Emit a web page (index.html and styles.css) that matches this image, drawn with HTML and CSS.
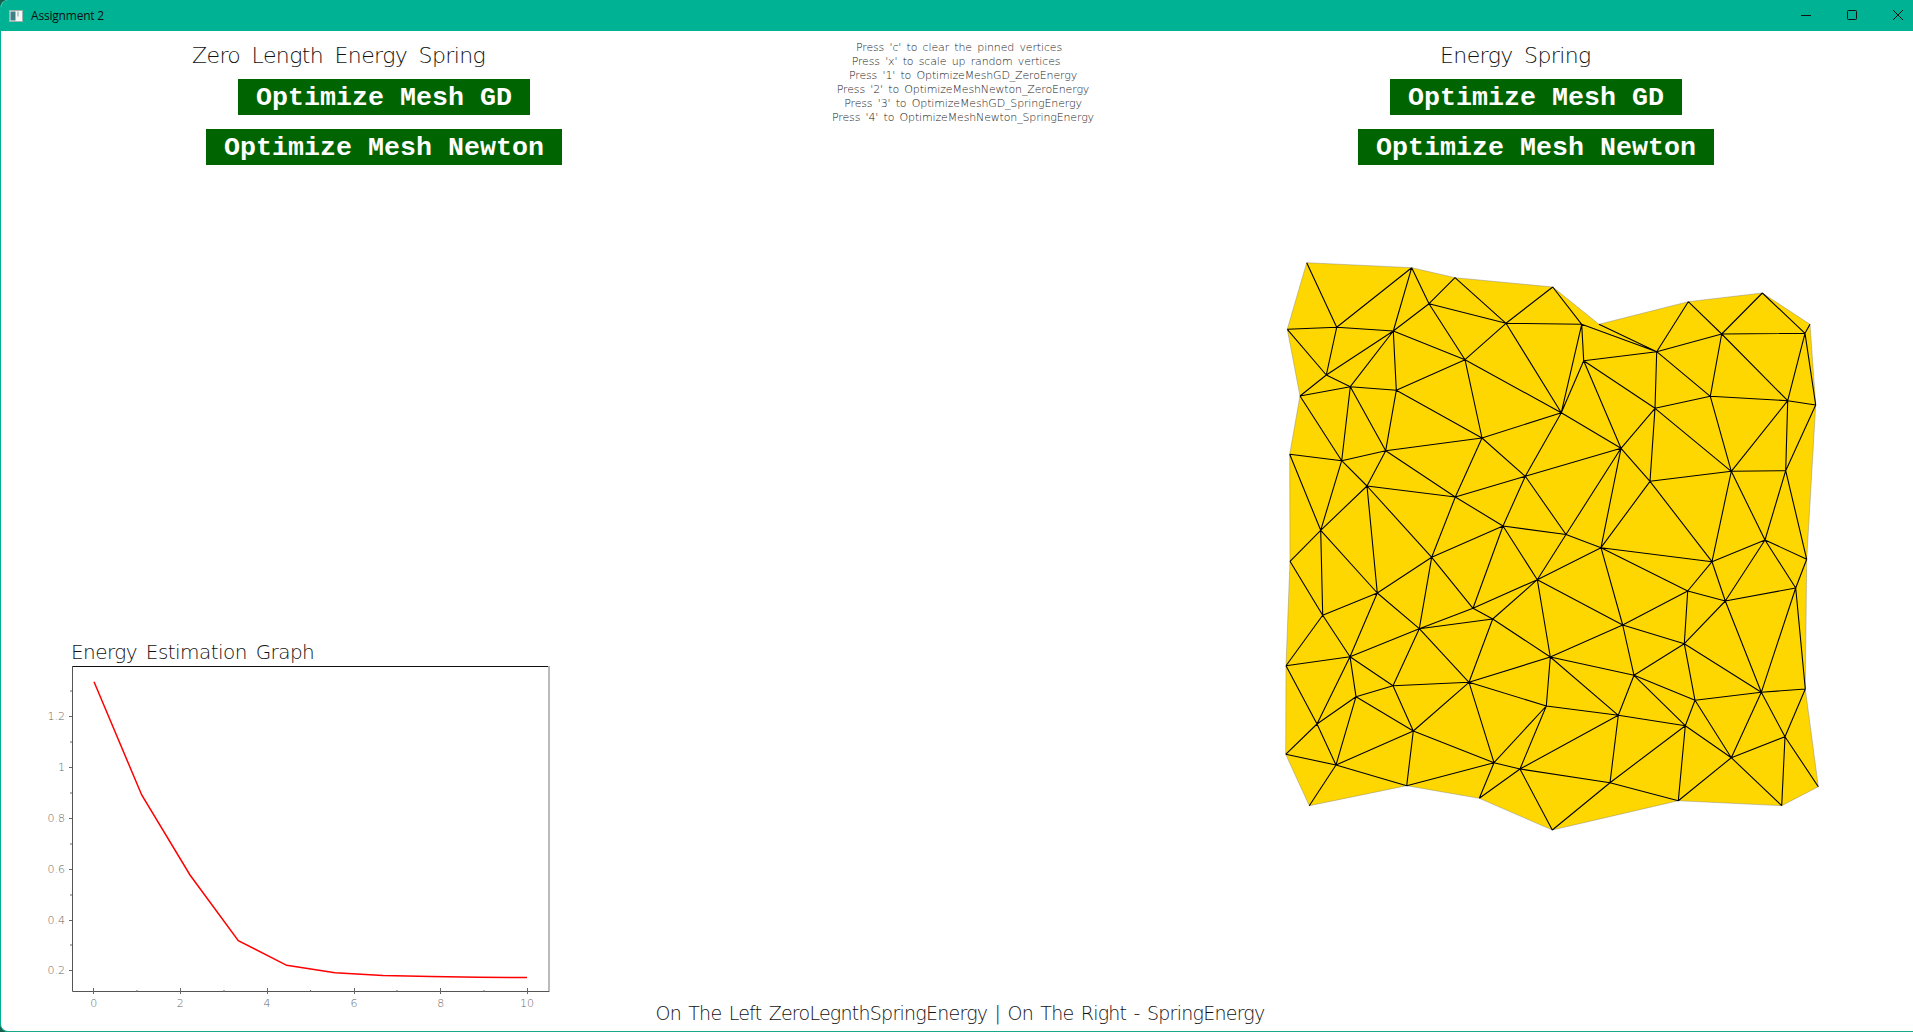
FILE: index.html
```html
<!DOCTYPE html>
<html lang="en">
<head>
<meta charset="utf-8">
<title>Assignment 2</title>
<link rel="stylesheet" href="styles.css">
</head>
<body>
<div class="window">
  <header class="titlebar">
    <svg class="app-icon" viewBox="0 0 14 12" aria-hidden="true">
      <rect x="0.5" y="0.5" width="13" height="11" fill="#f4f7f6" stroke="#9fb3ad"/>
      <rect x="1.5" y="1.5" width="5" height="9" fill="#3f7f86"/>
      <rect x="8" y="1.5" width="2" height="5" fill="#b9cdd0"/>
    </svg>
    <span class="app-title">Assignment 2</span>
    <div class="controls">
      <svg class="ctl" viewBox="0 0 10 10" aria-hidden="true"><path d="M0 5.5H10"/></svg>
      <svg class="ctl" viewBox="0 0 10 10" aria-hidden="true"><rect x="0.5" y="0.5" width="9" height="9" rx="1"/></svg>
      <svg class="ctl" viewBox="0 0 10 10" aria-hidden="true"><path d="M0 0L10 10M10 0L0 10"/></svg>
    </div>
  </header>
  <main class="content">
    <section class="col col-left">
      <h2 class="heading heading-left">Zero Length Energy Spring</h2>
      <button class="btn btn-gd-left">Optimize Mesh GD</button>
      <button class="btn btn-newton-left">Optimize Mesh Newton</button>
      <div class="graph">
        <h3 class="graph-title">Energy Estimation Graph</h3>
        <svg class="plot" viewBox="40 666 520 349" aria-label="Energy plot">
          <path class="frame" d="M72.5 666.5H549"/>
          <path class="frame-right" d="M549 666V992"/>
          <path class="axis" d="M72.5 666V991.5H549"/>
          <path class="tick" d="M69 716.5h3.5M69 767.5h3.5M69 818.5h3.5M69 869.5h3.5M69 920.5h3.5M69 970.5h3.5M70 691h2.5M70 742h2.5M70 793h2.5M70 844h2.5M70 895h2.5M70 945h2.5"/>
          <path class="tick" d="M93.5 988v6M180.5 988v6M267.5 988v6M354.5 988v6M440.5 988v6M527.5 988v6M137 990v2M224 990v2M310.5 990v2M397 990v2M484 990v2"/>
          <polyline class="curve" points="94,681.7 141.7,795 190,875 238.3,940.7 286.7,965.3 335,972.7 383,975.6 431,976.6 479,977.2 527,977.6"/>
          <g class="ylabels">
            <text x="65" y="720">1.2</text>
            <text x="65" y="771">1</text>
            <text x="65" y="822">0.8</text>
            <text x="65" y="873">0.6</text>
            <text x="65" y="924">0.4</text>
            <text x="65" y="974">0.2</text>
          </g>
          <g class="xlabels">
            <text x="93.7" y="1007">0</text>
            <text x="180.3" y="1007">2</text>
            <text x="267" y="1007">4</text>
            <text x="354" y="1007">6</text>
            <text x="440.7" y="1007">8</text>
            <text x="527" y="1007">10</text>
          </g>
        </svg>
      </div>
    </section>
    <section class="col col-center">
      <div class="help">
        <p class="help-line shift-a">Press 'c' to clear the pinned vertices</p>
        <p class="help-line shift-b">Press 'x' to scale up random vertices</p>
        <p class="help-line">Press '1' to OptimizeMeshGD_ZeroEnergy</p>
        <p class="help-line">Press '2' to OptimizeMeshNewton_ZeroEnergy</p>
        <p class="help-line">Press '3' to OptimizeMeshGD_SpringEnergy</p>
        <p class="help-line">Press '4' to OptimizeMeshNewton_SpringEnergy</p>
      </div>
      <p class="caption">On The Left ZeroLegnthSpringEnergy | On The Right - SpringEnergy</p>
    </section>
    <section class="col col-right">
      <h2 class="heading heading-right">Energy Spring</h2>
      <button class="btn btn-gd-right">Optimize Mesh GD</button>
      <button class="btn btn-newton-right">Optimize Mesh Newton</button>
      <svg class="mesh" viewBox="1280 255 545 580" aria-label="Triangle mesh">
        <polygon class="mesh-fill" points="1306.7,262.7 1411.7,267.7 1455,277.7 1552.7,287 1599,324.3 1688.3,301.7 1762.3,293 1810,324.3 1815.7,405 1806.7,559.3 1805.3,689 1818.3,786.7 1781.7,805.7 1678.3,800.7 1552.3,830 1479.3,798.3 1406.7,785.7 1309.3,805.7 1285.7,754.3 1286,665.7 1290,561.3 1289.7,454.3 1300,396 1287.3,329.3"/>
        <path class="mesh-edges" d="M1306.7 262.7L1336.7 327.3M1411.7 267.7L1336.7 327.3M1411.7 267.7L1393.3 331M1411.7 267.7L1429 303.7M1455 277.7L1429 303.7M1455 277.7L1506 323.3M1552.7 287L1506 323.3M1552.7 287L1581.7 324.3M1429 303.7L1393.3 331M1429 303.7L1506 323.3M1506 323.3L1581.7 324.3M1429 303.7L1465 359.7M1506 323.3L1465 359.7M1287.3 329.3L1336.7 327.3M1336.7 327.3L1393.3 331M1287.3 329.3L1326.3 375M1336.7 327.3L1326.3 375M1326.3 375L1393.3 331M1393.3 331L1350.3 386.7M1326.3 375L1350.3 386.7M1326.3 375L1300 396M1300 396L1350.3 386.7M1393.3 331L1396.3 390.3M1350.3 386.7L1396.3 390.3M1393.3 331L1465 359.7M1396.3 390.3L1465 359.7M1396.3 390.3L1385.7 450.7M1350.3 386.7L1385.7 450.7M1350.3 386.7L1341.7 460.7M1300 396L1341.7 460.7M1289.7 454.3L1341.7 460.7M1341.7 460.7L1385.7 450.7M1385.7 450.7L1482 438M1396.3 390.3L1482 438M1465 359.7L1482 438M1465 359.7L1561.3 412.7M1506 323.3L1561.3 412.7M1581.7 324.3L1561.3 412.7M1581.7 324.3L1583.7 360.7M1583.7 360.7L1561.3 412.7M1385.7 450.7L1455.3 497M1385.7 450.7L1367 486M1341.7 460.7L1367 486M1341.7 460.7L1320.7 530.3M1289.7 454.3L1320.7 530.3M1482 438L1561.3 412.7M1482 438L1525.3 476.3M1482 438L1455.3 497M1561.3 412.7L1525.3 476.3M1525.3 476.3L1621 448.3M1455.3 497L1525.3 476.3M1455.3 497L1503 526M1525.3 476.3L1503 526M1525.3 476.3L1566 534.5M1503 526L1566 534.5M1561.3 412.7L1621 448.3M1367 486L1455.3 497M1367 486L1320.7 530.3M1367 486L1377.3 593M1367 486L1431.7 557.3M1455.3 497L1431.7 557.3M1320.7 530.3L1290 561.3M1320.7 530.3L1322.7 615.3M1320.7 530.3L1377.3 593M1621 448.3L1566 534.5M1621 448.3L1601 547.7M1650 481.3L1601 547.7M1581.7 324.3L1656.7 351.7M1599 324.3L1656.7 351.7M1656.7 351.7L1688.3 301.7M1688.3 301.7L1721.7 334M1721.7 334L1762.3 293M1762.3 293L1805 333.3M1805 333.3L1721.7 334M1805 333.3L1810 324.3M1656.7 351.7L1721.7 334M1583.7 360.7L1656.7 351.7M1656.7 351.7L1710.3 396.3M1656.7 351.7L1655 408.3M1583.7 360.7L1655 408.3M1721.7 334L1710.3 396.3M1721.7 334L1787.7 400.7M1710.3 396.3L1787.7 400.7M1805 333.3L1787.7 400.7M1805 333.3L1815.7 405M1787.7 400.7L1815.7 405M1710.3 396.3L1655 408.3M1710.3 396.3L1731.3 471.3M1655 408.3L1731.3 471.3M1787.7 400.7L1731.3 471.3M1787.7 400.7L1785.7 470.7M1731.3 471.3L1785.7 470.7M1815.7 405L1785.7 470.7M1655 408.3L1621 448.3M1655 408.3L1650 481.3M1583.7 360.7L1621 448.3M1621 448.3L1650 481.3M1650 481.3L1731.3 471.3M1650 481.3L1712 561.7M1731.3 471.3L1712 561.7M1731.3 471.3L1765 540M1785.7 470.7L1765 540M1785.7 470.7L1806.7 559.3M1290 561.3L1322.7 615.3M1322.7 615.3L1377.3 593M1377.3 593L1431.7 557.3M1431.7 557.3L1503 526M1431.7 557.3L1419.3 628.7M1431.7 557.3L1473 608.3M1377.3 593L1419.3 628.7M1419.3 628.7L1473 608.3M1419.3 628.7L1492.7 619M1473 608.3L1492.7 619M1473 608.3L1537.3 579.7M1473 608.3L1503 526M1503 526L1537.3 579.7M1537.3 579.7L1566 534.5M1537.3 579.7L1492.7 619M1492.7 619L1550.3 657M1492.7 619L1469 682.3M1419.3 628.7L1469 682.3M1419.3 628.7L1393 685.7M1419.3 628.7L1350 656.7M1350 656.7L1377.3 593M1350 656.7L1322.7 615.3M1322.7 615.3L1286 665.7M1286 665.7L1350 656.7M1286 665.7L1317 724M1350 656.7L1317 724M1350 656.7L1356 696.7M1350 656.7L1393 685.7M1393 685.7L1356 696.7M1393 685.7L1469 682.3M1393 685.7L1413.3 731M1356 696.7L1317 724M1356 696.7L1336 765M1356 696.7L1413.3 731M1317 724L1285.7 754.3M1317 724L1336 765M1285.7 754.3L1336 765M1336 765L1309.3 805.7M1336 765L1406.7 785.7M1336 765L1413.3 731M1413.3 731L1406.7 785.7M1413.3 731L1469 682.3M1413.3 731L1494 762.7M1406.7 785.7L1494 762.7M1469 682.3L1494 762.7M1469 682.3L1550.3 657M1469 682.3L1546.3 706M1494 762.7L1546.3 706M1494 762.7L1520 769M1494 762.7L1479.3 798.3M1479.3 798.3L1520 769M1520 769L1552.3 830M1520 769L1546.3 706M1550.3 657L1546.3 706M1550.3 657L1537.3 579.7M1566 534.5L1601 547.7M1537.3 579.7L1601 547.7M1601 547.7L1712 561.7M1601 547.7L1687.7 591M1601 547.7L1622.7 625M1537.3 579.7L1622.7 625M1712 561.7L1765 540M1765 540L1806.7 559.3M1765 540L1795.7 588M1806.7 559.3L1795.7 588M1765 540L1725.3 601M1712 561.7L1725.3 601M1712 561.7L1687.7 591M1687.7 591L1725.3 601M1795.7 588L1725.3 601M1687.7 591L1684.3 643.7M1725.3 601L1684.3 643.7M1622.7 625L1687.7 591M1622.7 625L1684.3 643.7M1622.7 625L1634 675.3M1634 675.3L1684.3 643.7M1684.3 643.7L1695 700.3M1684.3 643.7L1761.3 692.3M1725.3 601L1761.3 692.3M1795.7 588L1761.3 692.3M1795.7 588L1805.3 689M1761.3 692.3L1805.3 689M1761.3 692.3L1695 700.3M1634 675.3L1695 700.3M1634 675.3L1618.3 715.3M1634 675.3L1685.3 725.7M1550.3 657L1634 675.3M1550.3 657L1622.7 625M1550.3 657L1618.3 715.3M1695 700.3L1685.3 725.7M1695 700.3L1731.3 757.7M1761.3 692.3L1731.3 757.7M1761.3 692.3L1785 736.7M1805.3 689L1785 736.7M1785 736.7L1731.3 757.7M1785 736.7L1818.3 786.7M1785 736.7L1781.7 805.7M1731.3 757.7L1781.7 805.7M1731.3 757.7L1678.3 800.7M1685.3 725.7L1731.3 757.7M1685.3 725.7L1678.3 800.7M1685.3 725.7L1618.3 715.3M1685.3 725.7L1610 782.7M1618.3 715.3L1610 782.7M1610 782.7L1678.3 800.7M1610 782.7L1552.3 830M1546.3 706L1618.3 715.3M1618.3 715.3L1520 769M1520 769L1610 782.7"/>
      </svg>
    </section>
  </main>
</div>
</body>
</html>
```
FILE: styles.css
```css
* { box-sizing: border-box; }
html, body { margin: 0; height: 100%; background: #17604f; }
body { overflow: hidden; }

.window {
  width: 1913px;
  height: 1032px;
  display: flex;
  flex-direction: column;
  background: #fff;
  border-left: 1px solid #00b294;
  border-bottom: 1px solid #17a78c;
  border-radius: 8px 0 0 8px;
  overflow: hidden;
  color: #111;
}

.titlebar {
  flex: none;
  height: 31px;
  margin-left: -1px;
  background: #00b294;
  display: flex;
  align-items: center;
  padding-left: 9px;
}
.app-icon { width: 14px; height: 12px; }
.app-title {
  margin-left: 8px;
  font: 12px "Open Sans", sans-serif;
  letter-spacing: -0.2px;
  color: #111;
}
.controls {
  margin-left: auto;
  margin-top: -1px;
  display: flex;
  gap: 36px;
  padding-right: 10px;
}
.ctl { display: block; width: 10px; height: 10px; fill: none; stroke: #111; stroke-width: 1; }

.content {
  flex: 1;
  min-height: 0;
  display: grid;
  grid-template-columns: 639px 646px 1fr;
}
.col { display: flex; flex-direction: column; align-items: flex-start; min-width: 0; }

.heading {
  margin: 0;
  height: 48px;
  line-height: 49px;
  font-family: "DejaVu Sans", sans-serif;
  font-weight: 200;
  font-size: 22px;
  letter-spacing: -0.6px;
  word-spacing: 5px;
  color: #111;
  white-space: nowrap;
}
.heading-left { margin-left: 191px; }
.heading-right { margin-left: 154px; }

.btn {
  display: block;
  height: 36px;
  border: 0;
  padding: 2px 18px 0;
  background: #006400;
  color: #fff;
  font: bold 26.67px/34px "Liberation Mono", monospace;
  white-space: nowrap;
}
.btn-newton-left, .btn-newton-right { margin-top: 14px; }
.btn-gd-left { margin-left: 237px; }
.btn-newton-left { margin-left: 205px; }
.btn-gd-right { margin-left: 104px; }
.btn-newton-right { margin-left: 72px; }

.graph { margin-top: auto; margin-left: 39px; width: 520px; }
.graph-title {
  margin: 0 0 0 31px;
  height: 27px;
  line-height: 27px;
  font-family: "DejaVu Sans", sans-serif;
  font-weight: 200;
  font-size: 20px;
  letter-spacing: -0.55px;
  word-spacing: 3px;
  color: #111;
  white-space: nowrap;
}
.plot { display: block; width: 520px; height: 349px; margin-bottom: 16px; }
.frame { stroke: #111; fill: none; }
.frame-right { stroke: #bbb; stroke-width: 2; fill: none; }
.axis { stroke: #555; fill: none; }
.tick { stroke: #666; fill: none; }
.curve { fill: none; stroke: #ff0000; stroke-width: 1.5; }
.ylabels text, .xlabels text {
  font-family: "DejaVu Sans", sans-serif;
  font-weight: 200;
  font-size: 11px;
  fill: #666;
}
.ylabels text { text-anchor: end; }
.xlabels text { text-anchor: middle; }

.col-center { align-items: center; }
.help { padding-top: 10px; width: 100%; }
.help-line {
  margin: 0;
  height: 14px;
  line-height: 14px;
  text-align: center;
  font-family: "DejaVu Sans", sans-serif;
  font-weight: 200;
  font-size: 11px;
  letter-spacing: -0.15px;
  word-spacing: 2px;
  color: #222;
  white-space: nowrap;
}
.shift-a { padding-right: 8px; }
.shift-b { padding-right: 14px; }
.caption {
  margin: auto 0 0;
  height: 36px;
  padding-right: 6px;
  line-height: 36px;
  font-family: "DejaVu Sans", sans-serif;
  font-weight: 200;
  font-size: 19px;
  letter-spacing: -0.75px;
  word-spacing: 2px;
  color: #111;
  white-space: nowrap;
}

.mesh { display: block; width: 545px; height: 580px; margin-top: 90px; margin-left: -6px; flex: none; }
.mesh-fill { fill: #ffd700; stroke: #777; stroke-width: 0.4; }
.mesh-edges { fill: none; stroke: #000; stroke-width: 1.1; }
```
